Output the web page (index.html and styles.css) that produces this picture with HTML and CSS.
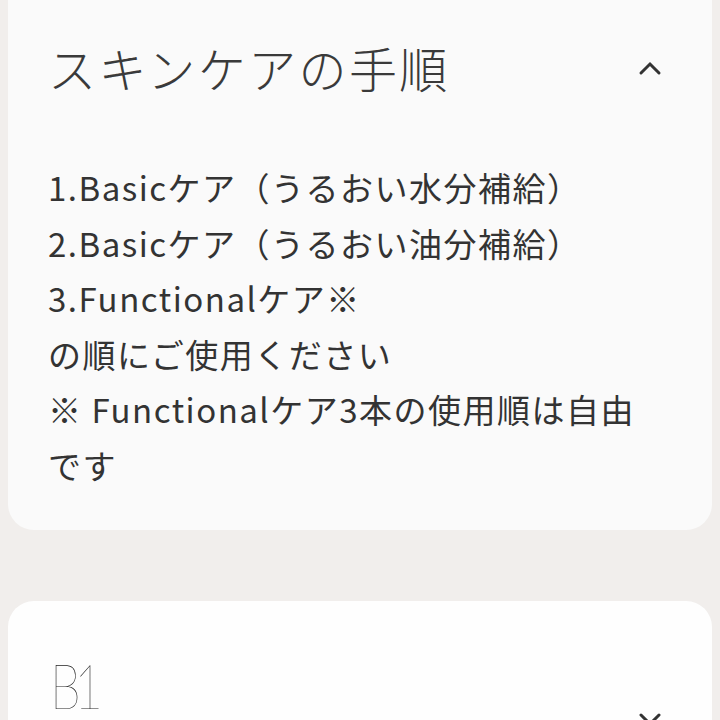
FILE: index.html
```html
<!DOCTYPE html>
<html lang="ja">
<head>
<meta charset="utf-8">
<link rel="stylesheet" href="styles.css">
</head>
<body>
<div class="page">
  <section class="card card-open">
    <div class="card-head">
      <h2 class="title">スキンケアの手順</h2>
      <svg class="chev" width="24" height="16" viewBox="0 0 24 16"><path d="M3 13 L12 4 L21 13" fill="none" stroke="#333" stroke-width="3" stroke-linecap="round"/></svg>
    </div>
    <div class="card-body">
      <p>1.Basicケア（うるおい水分補給）<br>2.Basicケア（うるおい油分補給）<br>3.Functionalケア※<br>の順にご使用ください<br>※ Functionalケア3本の使用順は自由です</p>
    </div>
  </section>
  <section class="card card-closed">
    <div class="card-head2">
      <span class="logo">B1</span>
      <svg class="chev chev-down" width="24" height="16" viewBox="0 0 24 16"><path d="M3 3 L12 12 L21 3" fill="none" stroke="#333" stroke-width="3" stroke-linecap="round"/></svg>
    </div>
  </section>
</div>
</body>
</html>
```
FILE: styles.css
```css
html, body {
  margin: 0;
  padding: 0;
  background: #f1eeec;
  height: 720px;
  overflow: hidden;
}
.page {
  padding: 0 8px;
  display: flex;
  flex-direction: column;
  gap: 71px;
  font-family: "Noto Sans CJK JP", "Noto Sans", sans-serif;
  color: #333;
}
.card {
  background: #fafafa;
}
.card-open {
  height: 530px;
  box-sizing: border-box;
  border-radius: 0 0 26px 26px;
  padding: 34px 50px 37px 40px;
}
.card-closed {
  background: #fefefe;
  border-radius: 26px;
  height: 200px;
  padding: 0 50px 0 42px;
}
.card-head {
  display: flex;
  align-items: center;
  justify-content: space-between;
}
.title {
  margin: 0;
  font-size: 48px;
  font-weight: 300;
  line-height: 67px;
  color: #3a3a3a;
  letter-spacing: 2.4px;
}
.chev {
  display: block;
}
.card-body {
  margin-top: 59px;
}
.card-body p {
  margin: 0;
  font-size: 33px;
  line-height: 55.5px;
  font-weight: 400;
  color: #333;
  letter-spacing: 1.5px;
  width: 618px;
}
.card-head2 {
  display: flex;
  justify-content: space-between;
  align-items: flex-start;
  padding-top: 59px;
}
.logo {
  display: block;
  font-family: Lato, sans-serif;
  font-weight: 100;
  font-size: 62px;
  line-height: 50px;
  color: #222;
  letter-spacing: -8px;
  transform: scaleX(0.8);
  transform-origin: left center;
}
.chev-down {
  margin-top: 52px;
}
```
